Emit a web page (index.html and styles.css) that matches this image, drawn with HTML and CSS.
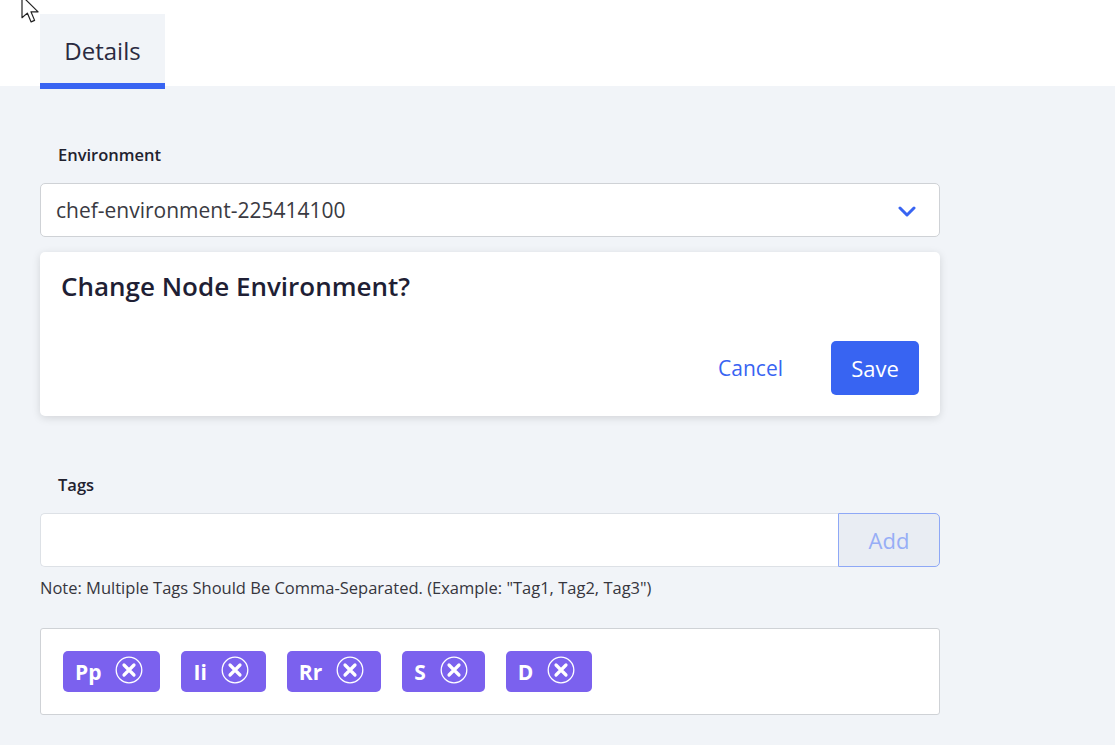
FILE: index.html
```html
<!DOCTYPE html>
<html>
<head>
<meta charset="utf-8">
<link rel="stylesheet" href="styles.css">
</head>
<body>
<svg class="cursor" width="22" height="32" viewBox="0 0 22 32"><path transform="translate(1 1) scale(1.4)" d="M0 0 L0 15.5 L3.8 12.2 L6.5 18.5 L9 17.4 L6.4 11.3 L11.5 11.3 Z" fill="#fff" stroke="#222" stroke-width="0.85" stroke-linejoin="round"/></svg>
<header class="top">
  <div class="tab">Details</div>
</header>
<main class="content">
  <div class="label">Environment</div>
  <div class="select">
    <span>chef-environment-225414100</span>
    <svg class="chev" width="18" height="11" viewBox="0 0 18 11"><path d="M2 2 L9 9 L16 2" fill="none" stroke="#3864f2" stroke-width="3" stroke-linecap="round" stroke-linejoin="round"/></svg>
  </div>
  <div class="dialog">
    <h2 class="dialog-title">Change Node Environment?</h2>
    <div class="dialog-actions">
      <button class="btn-cancel">Cancel</button>
      <button class="btn-save">Save</button>
    </div>
  </div>
  <div class="label tags-label">Tags</div>
  <div class="tag-input">
    <div class="input"></div>
    <button class="btn-add">Add</button>
  </div>
  <div class="note">Note: Multiple Tags Should Be Comma-Separated. (Example: "Tag1, Tag2, Tag3")</div>
  <div class="chips">
    <span class="chip">Pp<svg class="x" width="28" height="28" viewBox="0 0 28 28"><circle cx="14" cy="14" r="12.8" fill="none" stroke="#fff" stroke-width="1.3"/><path d="M9 9 L19 19 M19 9 L9 19" stroke="#fff" stroke-width="3.2" stroke-linecap="round"/></svg></span>
    <span class="chip">Ii<svg class="x" width="28" height="28" viewBox="0 0 28 28"><circle cx="14" cy="14" r="12.8" fill="none" stroke="#fff" stroke-width="1.3"/><path d="M9 9 L19 19 M19 9 L9 19" stroke="#fff" stroke-width="3.2" stroke-linecap="round"/></svg></span>
    <span class="chip">Rr<svg class="x" width="28" height="28" viewBox="0 0 28 28"><circle cx="14" cy="14" r="12.8" fill="none" stroke="#fff" stroke-width="1.3"/><path d="M9 9 L19 19 M19 9 L9 19" stroke="#fff" stroke-width="3.2" stroke-linecap="round"/></svg></span>
    <span class="chip">S<svg class="x" width="28" height="28" viewBox="0 0 28 28"><circle cx="14" cy="14" r="12.8" fill="none" stroke="#fff" stroke-width="1.3"/><path d="M9 9 L19 19 M19 9 L9 19" stroke="#fff" stroke-width="3.2" stroke-linecap="round"/></svg></span>
    <span class="chip">D<svg class="x" width="28" height="28" viewBox="0 0 28 28"><circle cx="14" cy="14" r="12.8" fill="none" stroke="#fff" stroke-width="1.3"/><path d="M9 9 L19 19 M19 9 L9 19" stroke="#fff" stroke-width="3.2" stroke-linecap="round"/></svg></span>
  </div>
</main>
</body>
</html>
```
FILE: styles.css
```css
* { box-sizing: border-box; }
html, body { margin: 0; padding: 0; }
body {
  background: #f1f4f8;
  font-family: "Open Sans", "Noto Sans", sans-serif;
  color: #1f1f33;
  min-height: 745px;
  position: relative;
}
.cursor { position: absolute; left: 21px; top: -5px; z-index: 10; }
.top {
  background: #fff;
  height: 86px;
  padding-left: 40px;
  display: flex;
  align-items: flex-start;
}
.tab {
  margin-top: 14px;
  width: 125px;
  height: 75px;
  background: #f1f4f8;
  border-bottom: 6px solid #3864f2;
  display: flex;
  align-items: center;
  justify-content: center;
  padding-top: 4px;
  font-size: 24px;
  color: #2a2a40;
  position: relative;
  z-index: 1;
}
.content {
  width: 980px;
  padding: 60px 40px 0;
}
.label {
  font-size: 16.5px;
  font-weight: 600;
  line-height: 18px;
  padding-left: 18px;
  color: #22222f;
}
.select {
  margin-top: 19px;
  height: 54px;
  background: #fff;
  border: 1px solid #cfd2d6;
  border-radius: 5px;
  display: flex;
  align-items: center;
  justify-content: space-between;
  padding: 0 23px 0 15px;
  font-size: 21px;
  color: #3a3a42;
}
.chev { margin-top: 2px; }
.dialog {
  margin-top: 15px;
  background: #fff;
  border-radius: 5px;
  box-shadow: 0 2px 8px rgba(0, 0, 0, 0.13);
  padding: 21px;
}
.dialog-title {
  margin: 0;
  font-size: 26px;
  line-height: 26px;
  font-weight: 600;
  color: #1f1f35;
}
.dialog-actions {
  margin-top: 42px;
  display: flex;
  justify-content: flex-end;
  gap: 38px;
}
button { font-family: inherit; cursor: pointer; }
.btn-cancel {
  background: none;
  border: none;
  color: #3864f2;
  font-size: 21px;
  height: 54px;
  padding: 0 10px;
}
.btn-save {
  background: #3864f2;
  border: none;
  border-radius: 5px;
  color: #fff;
  font-size: 22px;
  width: 88px;
  height: 54px;
}
.tags-label { margin-top: 60px; }
.tag-input {
  margin-top: 19px;
  display: flex;
  height: 54px;
}
.input {
  flex: 1;
  background: #fff;
  border: 1px solid #dde1e6;
  border-right: none;
  border-radius: 5px 0 0 5px;
}
.btn-add {
  width: 102px;
  background: #e9edf3;
  border: 1px solid #8ea8f6;
  border-radius: 0 5px 5px 0;
  color: #97aef6;
  font-size: 22px;
}
.note {
  margin-top: 12px;
  font-size: 16.5px;
  line-height: 18px;
  color: #36363e;
}
.chips {
  margin-top: 31px;
  background: #fff;
  border: 1px solid #cfd2d6;
  border-radius: 3px;
  padding: 22px;
  display: flex;
  gap: 21px;
}
.chip {
  height: 41px;
  background: #7b61ee;
  border-radius: 5px;
  color: #fff;
  font-weight: 700;
  font-size: 21px;
  display: inline-flex;
  align-items: center;
  padding: 0 17px 0 12px;
}
.chip .x { margin-left: 14px; margin-top: -3px; }
```
